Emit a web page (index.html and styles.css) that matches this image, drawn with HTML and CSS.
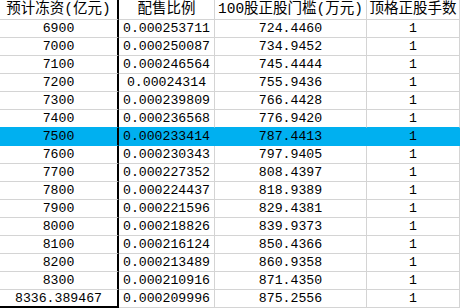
FILE: index.html
```html
<!DOCTYPE html>
<html lang="zh">
<head>
<meta charset="utf-8">
<link rel="stylesheet" href="styles.css">
</head>
<body>
<div class="sheet">
  <div class="row head">
    <div class="c c1">预计冻资(亿元)</div>
    <div class="c">配售比例</div>
    <div class="c">100股正股门槛(万元)</div>
    <div class="c">顶格正股手数</div>
  </div>
  <div class="row"><div class="c c1">6900</div><div class="c">0.000253711</div><div class="c">724.4460</div><div class="c">1</div></div>
  <div class="row"><div class="c c1">7000</div><div class="c">0.000250087</div><div class="c">734.9452</div><div class="c">1</div></div>
  <div class="row"><div class="c c1">7100</div><div class="c">0.000246564</div><div class="c">745.4444</div><div class="c">1</div></div>
  <div class="row"><div class="c c1">7200</div><div class="c">0.00024314</div><div class="c">755.9436</div><div class="c">1</div></div>
  <div class="row"><div class="c c1">7300</div><div class="c">0.000239809</div><div class="c">766.4428</div><div class="c">1</div></div>
  <div class="row pre-sel"><div class="c c1">7400</div><div class="c">0.000236568</div><div class="c">776.9420</div><div class="c">1</div></div>
  <div class="row sel"><div class="c c1">7500</div><div class="c">0.000233414</div><div class="c">787.4413</div><div class="c">1</div></div>
  <div class="row"><div class="c c1">7600</div><div class="c">0.000230343</div><div class="c">797.9405</div><div class="c">1</div></div>
  <div class="row"><div class="c c1">7700</div><div class="c">0.000227352</div><div class="c">808.4397</div><div class="c">1</div></div>
  <div class="row"><div class="c c1">7800</div><div class="c">0.000224437</div><div class="c">818.9389</div><div class="c">1</div></div>
  <div class="row"><div class="c c1">7900</div><div class="c">0.000221596</div><div class="c">829.4381</div><div class="c">1</div></div>
  <div class="row"><div class="c c1">8000</div><div class="c">0.000218826</div><div class="c">839.9373</div><div class="c">1</div></div>
  <div class="row"><div class="c c1">8100</div><div class="c">0.000216124</div><div class="c">850.4366</div><div class="c">1</div></div>
  <div class="row"><div class="c c1">8200</div><div class="c">0.000213489</div><div class="c">860.9358</div><div class="c">1</div></div>
  <div class="row"><div class="c c1">8300</div><div class="c">0.000210916</div><div class="c">871.4350</div><div class="c">1</div></div>
  <div class="row last"><div class="c c1">8336.389467</div><div class="c">0.000209996</div><div class="c">875.2556</div><div class="c">1</div></div>
</div>
</body>
</html>
```

FILE: styles.css
```css
html, body {
  margin: 0;
  padding: 0;
  background: #ffffff;
}

.sheet {
  display: grid;
  grid-template-columns: 119px 96px 152px 93px;
  grid-template-rows: 20px repeat(16, 18px);
  width: 460px;
  font-family: "Liberation Mono", "Noto Sans CJK SC", monospace;
  color: #000000;
}

.row {
  display: contents;
}

.c {
  box-sizing: border-box;
  border-right: 1px solid #d4d4d4;
  border-bottom: 1px solid #d4d4d4;
  text-align: center;
  white-space: nowrap;
  overflow: hidden;
  font-size: 13.2px;
  line-height: 17px;
}

.c1 {
  border-right: 2px solid #000000;
}

.head .c {
  font-size: 14.5px;
  line-height: 19px;
}

.pre-sel .c {
  border-bottom-color: #00b0f0;
}

.sel .c {
  background: #00b0f0;
  border-right-color: #00b0f0;
  border-bottom-color: #00b0f0;
}

.sel .c1 {
  border-right-color: #000000;
}

.last .c1 {
  border-bottom: 2px solid #000000;
}
```
